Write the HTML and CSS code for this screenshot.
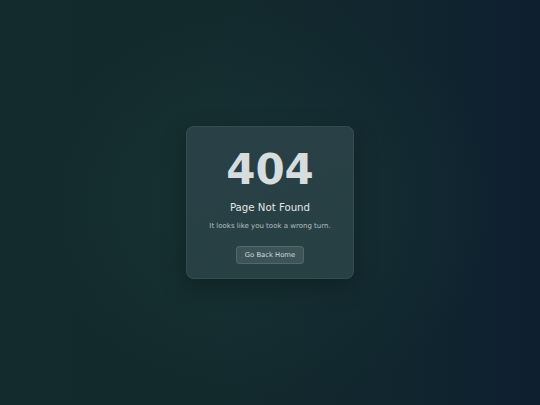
FILE: index.html
```html
<!DOCTYPE html>
<html lang="en">
<head>
<meta charset="utf-8">
<title>404 - Page Not Found</title>
<link rel="stylesheet" href="styles.css">
</head>
<body>
<main class="page">
  <section class="card">
    <h1 class="code">404</h1>
    <h2 class="title">Page Not Found</h2>
    <p class="message">It looks like you took a wrong turn.</p>
    <a class="button" href="#">Go Back Home</a>
  </section>
</main>
</body>
</html>
```
FILE: styles.css
```css
* { box-sizing: border-box; }
html, body {
  margin: 0;
  height: 100%;
}
body {
  font-family: "DejaVu Sans", Verdana, sans-serif;
  background:
    radial-gradient(ellipse 230px 200px at 50% 50%, rgba(28, 60, 60, 0.5), rgba(28, 60, 60, 0) 100%),
    linear-gradient(90deg, #132b2c 0%, #132a2d 40%, #10252e 75%, #0e2030 100%);
}
.page {
  height: 100%;
  display: flex;
  align-items: center;
  justify-content: center;
}
.card {
  width: 168px;
  height: 153px;
  padding: 18px 12px 16px;
  display: flex;
  flex-direction: column;
  align-items: center;
  background: linear-gradient(160deg, #294146 0%, #274044 100%);
  border: 1px solid rgba(255, 255, 255, 0.06);
  border-radius: 8px;
  box-shadow: 0 8px 24px rgba(0, 0, 0, 0.28);
}
.code {
  margin: 0;
  font-size: 42px;
  line-height: 50px;
  font-weight: bold;
  color: #d6dddf;
}
.title {
  margin: 7px 0 0;
  font-size: 10.2px;
  line-height: 12px;
  font-weight: normal;
  color: #e2e7e8;
}
.message {
  margin: 8px 0 0;
  font-size: 7px;
  line-height: 9px;
  color: #b3bfc0;
}
.button {
  margin-top: 15px;
  padding: 4px 8px;
  font-size: 6.8px;
  line-height: 8px;
  color: #d3dadb;
  text-decoration: none;
  background: rgba(255, 255, 255, 0.1);
  border: 1px solid rgba(255, 255, 255, 0.12);
  border-radius: 4px;
}
```
